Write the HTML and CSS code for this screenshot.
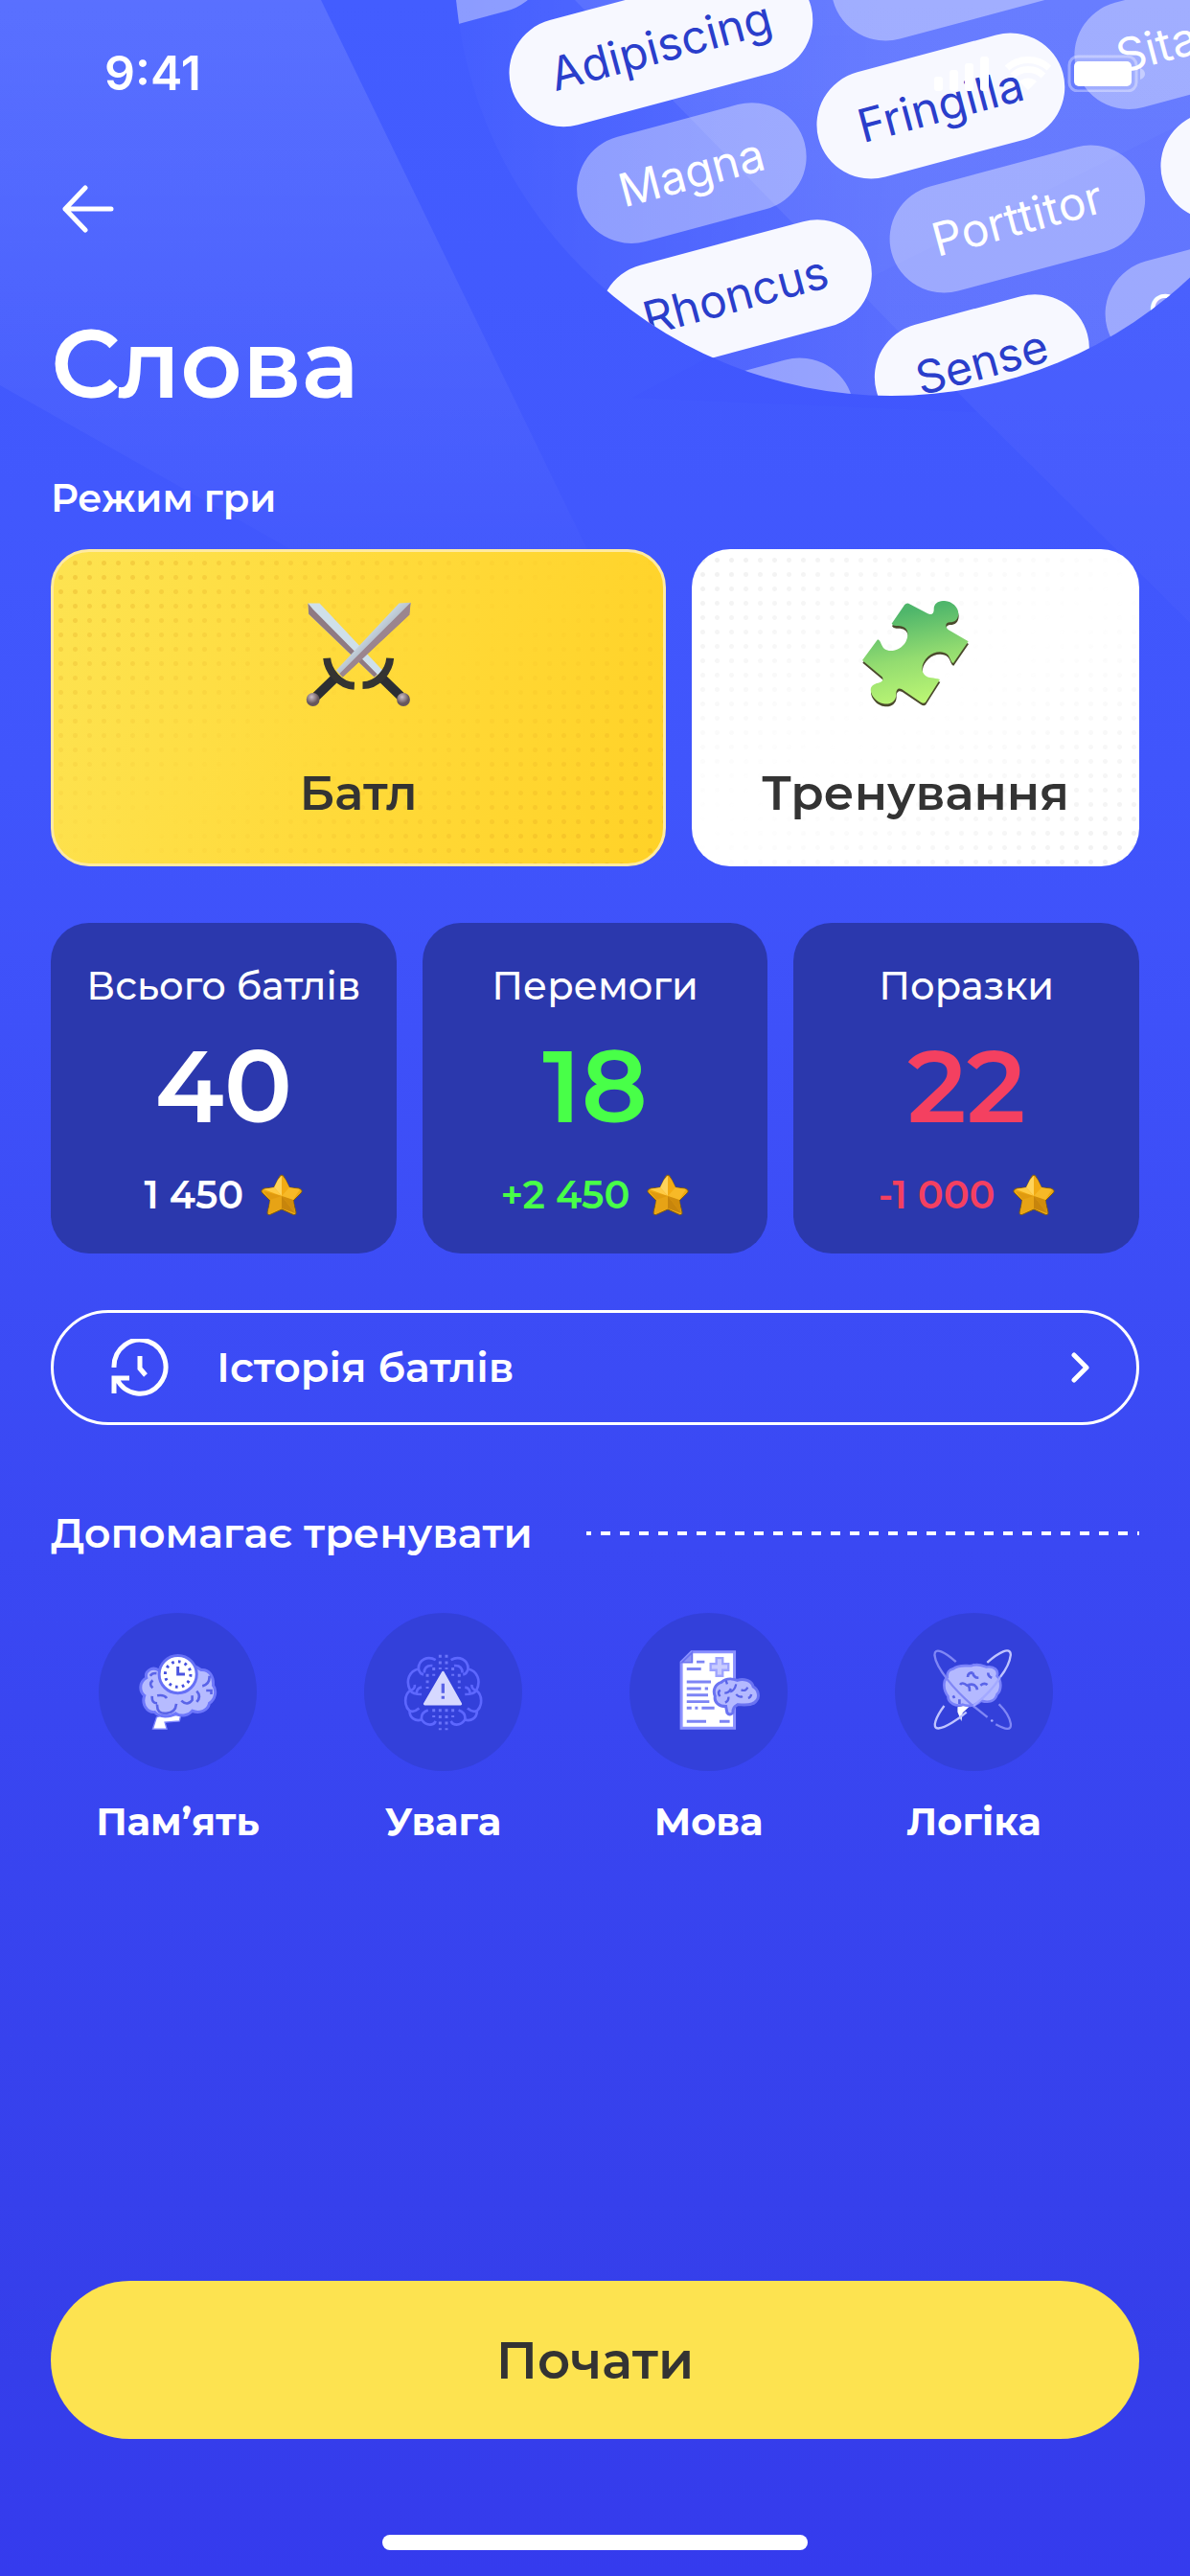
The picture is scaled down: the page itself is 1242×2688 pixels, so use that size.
FILE: index.html
```html
<!DOCTYPE html>
<html lang="uk">
  <head>
    <meta charset="UTF-8" />
    <meta name="viewport" content="width=device-width, initial-scale=1.0" />
    <title>Слова</title>
    <link rel="stylesheet" href="styles.css">
  </head>
  <body>
    <svg class="rays" viewBox="0 0 1242 700" preserveAspectRatio="none" aria-hidden="true">
      <defs>
        <linearGradient id="ray-left" x1="0" y1="0" x2="0" y2="1">
          <stop offset="0" stop-color="#fff" stop-opacity="0.12" />
          <stop offset="1" stop-color="#fff" stop-opacity="0" />
        </linearGradient>
        <linearGradient id="ray-right" x1="0" y1="0" x2="0" y2="1">
          <stop offset="0" stop-color="#fff" stop-opacity="0.08" />
          <stop offset="1" stop-color="#fff" stop-opacity="0.03" />
        </linearGradient>
      </defs>
      <path d="M0 0H335L650 650H440L0 402Z" fill="url(#ray-left)" />
      <path d="M600 0L1020 430L1242 650V0Z" fill="url(#ray-right)" />
      <path d="M1242 125L740 373L660 415L1020 430L1242 650Z" fill="#3a50ff" fill-opacity="0.15" />
    </svg>
    <svg class="words" viewBox="0 0 782 440" aria-hidden="true">
      <defs>
        <clipPath id="bubble"><circle cx="470" cy="-43" r="456" /></clipPath>
        <linearGradient id="bubble-fill" x1="0" y1="0" x2="0.6" y2="0">
          <stop offset="0" stop-color="#fff" stop-opacity="0.01" />
          <stop offset="1" stop-color="#fff" stop-opacity="0.13" />
        </linearGradient>
      </defs>
      <g clip-path="url(#bubble)">
        <rect width="782" height="440" fill="url(#bubble-fill)" />
        <g class="pill light" transform="translate(0 -28) rotate(-15)"><rect x="-50" y="-57" width="163" height="113" rx="57" /></g>
        <g class="pill" transform="translate(230 49) rotate(-15)"><rect x="-162" y="-57" width="324" height="113" rx="57" /><text y="16">Adipiscing</text></g>
        <g class="pill light" transform="translate(541 -34) rotate(-15)"><rect x="-136" y="-57" width="272" height="113" rx="57" /><text y="17">Cursus</text></g>
        <g class="pill light" transform="translate(262 181) rotate(-15)"><rect x="-122" y="-57" width="244" height="113" rx="57" /><text y="16">Magna</text></g>
        <g class="pill" transform="translate(522 111) rotate(-15)"><rect x="-132" y="-57" width="264" height="113" rx="57" /><text y="16">Fringilla</text></g>
        <g class="pill light" transform="translate(789 39) rotate(-15)"><rect x="-130" y="-57" width="260" height="113" rx="57" /><text y="16">Sitamet</text></g>
        <g class="pill" transform="translate(308 309) rotate(-15)"><rect x="-145" y="-57" width="290" height="113" rx="57" /><text y="16">Rhoncus</text></g>
        <g class="pill light" transform="translate(602 229) rotate(-15)"><rect x="-136" y="-57" width="272" height="113" rx="57" /><text y="16">Porttitor</text></g>
        <g class="pill" transform="translate(881 154) rotate(-15)"><rect x="-132" y="-57" width="264" height="113" rx="57" /></g>
        <g class="pill light" transform="translate(302 450) rotate(-15)"><rect x="-132" y="-57" width="264" height="113" rx="57" /></g>
        <g class="pill" transform="translate(565 379) rotate(-15)"><rect x="-114" y="-57" width="228" height="113" rx="57" /><text y="16">Sense</text></g>
        <g class="pill light" transform="translate(798 315) rotate(-15)"><rect x="-106" y="-57" width="212" height="113" rx="57" /><text x="-8" y="16">Cras</text></g>
      </g>
    </svg>

    <header class="status-bar">
      <span class="time">9:41</span>
      <svg class="status-icons" viewBox="0 0 222 40" aria-hidden="true">
        <rect x="0" y="24" width="9" height="15" rx="3" />
        <rect x="16" y="17" width="9" height="22" rx="3" />
        <rect x="32" y="10" width="9" height="29" rx="3" />
        <rect x="48" y="3" width="9" height="36" rx="3" />
        <path d="M98 38L89 29A13 13 0 0 1 107 29Z" />
        <path d="M82 23A23 23 0 0 1 114 23M76 15A33 33 0 0 1 120 15" fill="none" stroke="#fff" stroke-width="7" />
        <rect x="141" y="3" width="70" height="36" rx="9" fill="none" stroke="#fff" stroke-opacity="0.35" stroke-width="3" />
        <rect x="146" y="8" width="60" height="26" rx="5" />
        <path d="M215 15Q220 17 220 21T215 27Z" fill-opacity="0.4" />
      </svg>
    </header>

    <main>
      <button class="back" aria-label="Назад">
        <svg viewBox="0 0 54 54"><path d="M24 5L3 27L24 49M3 27H51" /></svg>
      </button>
      <h1>Слова</h1>

      <h2 class="mode-title">Режим гри</h2>
      <div class="modes">
        <button class="mode battle">
          <svg viewBox="60 90 324 324" aria-hidden="true">
            <defs>
              <linearGradient id="blade" x1="0" y1="0" x2="1" y2="1">
                <stop offset="0.35" stop-color="#d4e6ef" />
                <stop offset="0.5" stop-color="#b9c4cf" />
                <stop offset="0.56" stop-color="#9c8089" />
                <stop offset="1" stop-color="#a98d95" />
              </linearGradient>
              <radialGradient id="pommel" cx="0.4" cy="0.3">
                <stop offset="0" stop-color="#cdbfc6" />
                <stop offset="1" stop-color="#66565c" />
              </radialGradient>
            </defs>
            <path d="M70 97L105 97L297 302L270 320L72 130Z" fill="#cfe0ea" />
            <path d="M70 97L85 115L279 311L270 320L72 130Z" fill="#8f7a82" />
            <path d="M288 318L350 378" class="grip" />
            <path d="M318 263C315 302 280 345 235 345" class="guard" />
            <path d="M380 95L345 97L155 300L175 320L376 132Z" fill="url(#blade)" />
            <path d="M380 95L165 310L175 320L376 132Z" fill="#9b858e" />
            <path d="M157 318L95 378" class="grip" />
            <path d="M127 263C130 302 165 345 210 347" class="guard" />
            <circle cx="85" cy="388" r="20" fill="url(#pommel)" />
            <circle cx="358" cy="388" r="20" fill="url(#pommel)" />
          </svg>
          <span>Батл</span>
        </button>
        <button class="mode training">
          <svg viewBox="60 84 336 336" aria-hidden="true">
            <defs>
              <linearGradient id="puzzle-fill" x1="0.4" y1="0" x2="0.6" y2="1">
                <stop offset="0.1" stop-color="#4fb66b" />
                <stop offset="0.55" stop-color="#93dc70" />
                <stop offset="1" stop-color="#bdf774" />
              </linearGradient>
              <path id="piece" d="M205 92L265 124C279 130 285 121 284 108C285 91 300 83 318 84C342 86 360 103 361 123C361 143 348 151 335 151C318 152 319 166 330 175L392 211L345 279C336 276 336 262 327 252C311 238 284 242 266 258C246 277 242 301 255 316C267 328 285 324 303 330L258 401Q252 407 243 401L184 361C172 355 165 362 166 378C165 400 146 410 126 406C99 401 80 370 88 354C97 340 113 343 121 336Q127 329 122 322L60 270L108 205C118 206 118 225 130 235C148 247 181 238 196 212C209 187 203 161 170 162Q156 164 152 155L192 97Q197 90 205 92Z" />
            </defs>
            <use href="#piece" x="1" y="8" fill="#4b4a2c" />
            <use href="#piece" fill="url(#puzzle-fill)" />
          </svg>
          <span>Тренування</span>
        </button>
      </div>

      <svg width="0" height="0" class="sprite" aria-hidden="true">
        <symbol id="star" viewBox="0 0 44 44">
          <path d="M22 1Q24 1 26 6L30 14L40 15Q45 17 42 20L34 28L37 40Q37 44 33 42L22 37L11 42Q7 44 7 40L10 28L2 20Q-1 17 4 15L14 14L18 6Q20 1 22 1Z" fill="#eda912" stroke="#7d5a14" stroke-width="1" />
          <path d="M22 2L22 23L14 14L18 6Z" fill="#ffd35a" />
          <path d="M22 2L22 23L30 14L26 6Z" fill="#f2ab14" />
          <path d="M3 16L14 14L22 23Z" fill="#ffcb45" />
          <path d="M41 16L30 14L22 23L34 27Z" fill="#f7b927" />
          <path d="M22 23L34 27L36 41Z" fill="#d08c0c" />
          <path d="M22 23L36 41L22 36Z" fill="#c7850c" />
          <path d="M22 23L10 27L8 41L22 36Z" fill="#e7a315" />
          <path d="M22 23L10 27L3 18Z" fill="#e09a0f" />
        </symbol>
      </svg>
      <div class="stats">
        <div class="stat">
          <p class="label">Всього батлів</p>
          <p class="count">40</p>
          <p class="points">1 450 <svg><use href="#star" /></svg></p>
        </div>
        <div class="stat wins">
          <p class="label">Перемоги</p>
          <p class="count">18</p>
          <p class="points">+2 450 <svg><use href="#star" /></svg></p>
        </div>
        <div class="stat losses">
          <p class="label">Поразки</p>
          <p class="count">22</p>
          <p class="points">-1 000 <svg><use href="#star" /></svg></p>
        </div>
      </div>

      <button class="history">
        <svg class="clock" viewBox="0 0 60 60"><path d="M3 30A27 28 0 1 1 6 42M3 57V41H19M30 18V31L36 38" /></svg>
        <span>Історія батлів</span>
        <svg class="chevron" viewBox="0 0 20 32"><path d="M3 3L16 16L3 29" /></svg>
      </button>

      <div class="skills-head">
        <h2>Допомагає тренувати</h2>
        <span class="dashes"></span>
      </div>
      <ul class="skills">
        <li>
          <div class="skill-icon">
            <svg viewBox="38 38 497 497" aria-hidden="true">
              <path d="M236 360H296L292 378L246 382L252 403H208L220 366Z" fill="#fff" stroke="#7f86ff" stroke-width="4" />
              <path d="M226 218C205 205 182 222 188 242C165 255 165 285 182 298C172 325 190 352 214 350C230 368 262 366 280 354C298 366 322 360 332 346C356 356 382 344 386 322C405 310 410 282 398 266C400 238 386 215 360 217C320 190 260 195 226 218Z" fill="#b6bbff" stroke="#6e77fb" stroke-width="9" />
              <path class="fold" d="M200 236Q206 226 220 228M208 250Q194 262 208 274M206 300Q204 322 222 322M222 298Q244 294 252 306M222 326Q220 356 250 354Q280 352 282 324M298 314Q316 332 332 312V298M346 284Q362 300 346 318M386 236Q388 262 364 268M376 282H392V294" />
              <circle cx="287" cy="231" r="59" fill="#fff" stroke="#6670f6" stroke-width="9" />
              <circle cx="287" cy="231" r="40" fill="none" stroke="#4550df" stroke-width="9" stroke-dasharray="8 12.9" />
              <path d="M287 207V231H309" fill="none" stroke="#4a54e0" stroke-width="9" />
            </svg>
          </div>
          <p>Пам’ять</p>
        </li>
        <li>
          <div class="skill-icon">
            <svg viewBox="869 38 497 497" aria-hidden="true">
              <g class="outline">
                <g id="half">
                  <path d="M1094 186C1070 172 1040 184 1040 214C1012 220 998 250 1014 282C995 294 994 330 1012 346C1012 368 1030 380 1050 374C1066 396 1088 392 1094 378" />
                  <path d="M1084 204C1064 202 1058 214 1058 226M1040 214Q1044 230 1056 232M1016 282Q1030 276 1028 264M1014 282Q1022 294 1050 294M1050 272Q1034 274 1034 292M1012 346Q1026 352 1042 338M1050 374Q1046 352 1070 344" />
                </g>
                <use href="#half" transform="translate(2236 0) scale(-1 1)" />
              </g>
              <g class="dots">
                <path d="M1108 170V216M1128 170V216M1068 230V276M1088 210V236M1148 210V236M1168 230V276M1108 340V406M1128 340V406M1088 340V366M1148 340V366" />
              </g>
              <path d="M1117 226L1172 324H1060Z" fill="#d6d8ff" stroke="#d6d8ff" stroke-width="9" stroke-linejoin="round" />
              <path d="M1117 260V290M1117 299V308" stroke="#5a63e6" stroke-width="10" />
            </svg>
          </div>
          <p>Увага</p>
        </li>
        <li>
          <div class="skill-icon">
            <svg viewBox="21 38 497 497" aria-hidden="true">
              <path d="M216 161H351V400H184V193Z" fill="#fff" stroke="#8a90ff" stroke-width="9" />
              <path d="M218 163V194H186Z" fill="#8d93f5" stroke="#6a72f0" stroke-width="5" />
              <path class="lines" d="M232 192H257M201 214H246M201 255H277M201 276H246M258 276H268M201 296H268M201 317H272M201 337H216M227 337H236M248 337H288M201 379H262M304 379H336" />
              <path d="M294 180H314V198H332V218H314V236H294V218H276V198H294Z" fill="#c9ccff" stroke="#9da3ff" stroke-width="7" />
              <path d="M310 256C326 240 350 246 360 250C380 242 406 252 410 270C428 280 430 305 420 314C410 330 380 328 362 326C352 332 346 334 346 352Q336 362 328 352L324 332C304 332 286 320 290 300C282 282 290 262 310 256Z" fill="#b4b9ff" stroke="#6a73f2" stroke-width="9" />
              <path class="fold thin" d="M324 250L328 262M306 280Q296 290 306 300M340 276Q334 290 320 290M356 262Q352 282 338 286M372 280Q388 286 392 272M356 294Q368 306 376 300M332 302Q334 314 322 320M404 294Q402 304 394 306" />
            </svg>
          </div>
          <p>Мова</p>
        </li>
        <li>
          <div class="skill-icon">
            <svg viewBox="853 38 497 497" aria-hidden="true">
              <path d="M1050 334L1094 326L1066 352L1062 378L1050 350Z" fill="#fff" />
              <path d="M1036 214C1056 198 1080 206 1094 204C1114 196 1134 206 1140 208C1166 204 1180 220 1174 236C1190 252 1188 282 1174 294C1168 316 1148 322 1124 314C1108 332 1078 332 1066 326C1046 334 1020 322 1020 300C1004 280 1004 250 1018 240C1016 226 1024 216 1036 214Z" fill="#b4b9ff" stroke="#7a82fa" stroke-width="8" />
              <path class="fold" d="M1082 240Q1082 226 1098 226M1098 226Q1100 242 1116 242M1058 264Q1064 254 1080 266Q1088 264 1088 284M1084 264Q1108 258 1112 280M1122 266Q1134 256 1144 264M1146 226Q1146 238 1158 242M1036 298L1040 306M1056 310V324" />
              <g fill="none" stroke-width="7">
                <path d="M1045 192C1012 162 976 142 978 172C982 212 1042 282 1096 328L1144 366M1170 388C1200 404 1220 410 1217 386Q1212 356 1180 325" stroke="#8087f5" />
                <path d="M1143 194C1180 162 1216 142 1217 170C1214 196 1198 222 1184 240" stroke="#c0c4ff" />
                <path d="M1008 330C984 362 966 402 990 401C1012 398 1050 374 1078 350" stroke="#c0c4ff" />
                <path d="M1100 330Q1156 286 1184 240" stroke="#a3a9ff" />
              </g>
              <circle cx="1158" cy="377" r="4" fill="#a3a9ff" />
            </svg>
          </div>
          <p>Логіка</p>
        </li>
      </ul>
    </main>

    <footer>
      <button class="start">Почати</button>
      <div class="home-bar"></div>
    </footer>
  </body>
</html>
```

FILE: styles.css
```css
* {
  margin: 0;
  padding: 0;
  box-sizing: border-box;
  font-family: "Montserrat", "Inter", sans-serif;
}

body {
  position: relative;
  min-height: 100vh;
  padding: 0 53px;
  display: flex;
  flex-direction: column;
  background: linear-gradient(#435dff, #4055fc 30%, #3a48f3 60%, #353eea 92%, #353bee);
  color: #fff;
  overflow-x: hidden;
}

button {
  border: 0;
  color: inherit;
  cursor: pointer;
}

svg {
  display: block;
  flex-shrink: 0;
}

/* background artwork */
.rays {
  position: absolute;
  top: 0;
  left: 0;
  width: 100%;
  height: 700px;
}

.words {
  position: absolute;
  top: 0;
  right: 0;
  width: 782px;
  height: 440px;
}

.pill rect {
  fill: #f7f8ff;
}

.pill text {
  font-family: "Inter", sans-serif;
  font-size: 48px;
  text-anchor: middle;
  fill: #2a3ecb;
}

.pill.light rect {
  fill: #fff;
  fill-opacity: 0.38;
}

.pill.light text {
  fill: #fff;
}

.status-bar,
main,
footer {
  position: relative;
}

.status-bar {
  display: flex;
  align-items: center;
  justify-content: space-between;
  height: 60px;
  margin-top: 46px;
  padding-left: 56px;
}

.time {
  font-family: "Inter", sans-serif;
  font-size: 50px;
  line-height: 60px;
  font-weight: 600;
}

.status-icons {
  width: 222px;
  height: 40px;
  margin-right: -8px;
  fill: #fff;
}

.back {
  display: block;
  width: 80px;
  height: 56px;
  margin-top: 84px;
  padding-left: 12px;
  background: none;
}

.back svg {
  width: 54px;
  height: 54px;
  fill: none;
  stroke: #fff;
  stroke-width: 5;
  stroke-linecap: round;
  stroke-linejoin: round;
}

h1 {
  margin-top: 83px;
  font-size: 100px;
  line-height: 100px;
  font-weight: 600;
}

h2 {
  font-weight: 600;
  font-size: 43px;
  line-height: 60px;
}

.mode-title {
  margin-top: 67px;
  font-size: 40px;
  line-height: 48px;
}

.modes {
  display: flex;
  gap: 27px;
  margin-top: 29px;
}

.mode {
  position: relative;
  display: flex;
  flex-direction: column;
  align-items: center;
  justify-content: space-between;
  height: 331px;
  padding: 54px 0 46px;
  border-radius: 40px;
  overflow: hidden;
  color: #333;
  font-size: 50px;
  line-height: 60px;
  font-weight: 600;
}

.mode::before {
  content: "";
  position: absolute;
  inset: 0;
  background: radial-gradient(circle, #e0a020 2px, transparent 3px) 0 4px / 15px 15px;
  opacity: 0.35;
  -webkit-mask-image: linear-gradient(150deg, #000, transparent 50%, #000);
  mask-image: linear-gradient(150deg, #000, transparent 50%, #000);
}

.mode svg {
  position: relative;
  width: 112px;
  height: 112px;
}

.mode span {
  position: relative;
}

.battle {
  flex: 636;
  border: 3px solid #ffeaa0;
  padding: 51px 0 43px;
  background: linear-gradient(105deg, #fde351, #ffda3a 50%, #ffd227);
}

.training {
  flex: 467;
  background: #fff;
}

.training::before {
  background: radial-gradient(circle, #bbb 2px, transparent 3px) 4px 4px / 15px 15px;
  opacity: 0.22;
}

.grip {
  fill: none;
  stroke: #2c2e33;
  stroke-width: 28;
}

.guard {
  fill: none;
  stroke: #343432;
  stroke-width: 23;
}

.sprite {
  position: absolute;
}

.stats {
  display: flex;
  gap: 27px;
  margin-top: 59px;
}

.stat {
  flex: 1;
  height: 345px;
  padding-top: 41px;
  border-radius: 40px;
  background: #2b38ad;
  text-align: center;
}

.label {
  font-size: 40px;
  line-height: 50px;
  font-weight: 500;
}

.count {
  margin-top: 24px;
  font-size: 106px;
  line-height: 110px;
  font-weight: 600;
}

.points {
  display: flex;
  align-items: center;
  justify-content: center;
  gap: 18px;
  margin-top: 34px;
  font-size: 40px;
  line-height: 50px;
  font-weight: 600;
}

.points svg {
  width: 44px;
  height: 44px;
}

.wins .count,
.wins .points {
  color: #48ff48;
}

.losses .count,
.losses .points {
  color: #f44060;
}

.history {
  display: flex;
  align-items: center;
  width: 100%;
  height: 120px;
  margin-top: 59px;
  padding: 0 48px 0 60px;
  border: 3px solid #fff;
  border-radius: 60px;
  background: none;
  font-size: 43px;
  line-height: 60px;
  font-weight: 600;
}

.history svg {
  fill: none;
  stroke: #fff;
  stroke-width: 5;
}

.clock {
  width: 60px;
  height: 60px;
}

.history span {
  margin-left: 50px;
}

.chevron {
  width: 20px;
  height: 32px;
  margin-left: auto;
  stroke-linecap: round;
  stroke-linejoin: round;
}

.skills-head {
  display: flex;
  align-items: center;
  gap: 56px;
  margin-top: 83px;
}

.dashes {
  flex: 1;
  height: 4px;
  background: repeating-linear-gradient(90deg, #fff 0 5px, transparent 5px 15px, #fff 15px 20px);
}

.skills {
  display: flex;
  margin: 53px 34px 0 -6px;
  list-style: none;
}

.skills li {
  flex: 1;
  text-align: center;
}

.skill-icon {
  width: 165px;
  height: 165px;
  margin: 0 auto 28px;
  border-radius: 50%;
  background: #3340da;
}

.skills p {
  font-size: 40px;
  line-height: 50px;
  font-weight: 700;
}

.fold {
  fill: none;
  stroke: #5a64e8;
  stroke-width: 8;
}

.fold.thin {
  stroke-width: 7;
}

.outline {
  fill: none;
  stroke: #5d67ff;
  stroke-width: 8;
}

.dots {
  fill: none;
  stroke: #6a73fa;
  stroke-width: 9;
  stroke-dasharray: 9 11;
}

.lines {
  stroke: #7d84f5;
  stroke-width: 9;
}

footer {
  margin-top: auto;
  padding-bottom: 27px;
}

.start {
  display: block;
  width: 100%;
  height: 165px;
  border-radius: 83px;
  background: #fde350;
  color: #333;
  font-size: 53px;
  font-weight: 600;
}

.home-bar {
  width: 39%;
  height: 16px;
  margin: 100px auto 0;
  border-radius: 8px;
  background: #fff;
}
```
